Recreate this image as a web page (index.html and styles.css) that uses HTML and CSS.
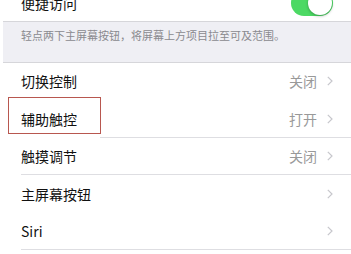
FILE: index.html
```html
<!DOCTYPE html>
<html lang="zh">
<head>
<meta charset="utf-8">
<link rel="stylesheet" href="styles.css">
</head>
<body>
<div class="screen">
  <div class="row row-top">
    <span class="label">便捷访问</span>
    <span class="toggle"><span class="knob"></span></span>
  </div>
  <div class="footer">轻点两下主屏幕按钮，将屏幕上方项目拉至可及范围。</div>
  <div class="group">
    <div class="row no-line">
      <span class="label">切换控制</span>
      <span class="value">关闭</span>
      <svg class="chev" viewBox="0 0 6 10"><polyline points="0.8,0.8 5,5 0.8,9.2"/></svg>
    </div>
    <div class="row boxed">
      <span class="label">辅助触控</span>
      <span class="value">打开</span>
      <svg class="chev" viewBox="0 0 6 10"><polyline points="0.8,0.8 5,5 0.8,9.2"/></svg>
      <span class="highlight"></span>
    </div>
    <div class="row">
      <span class="label">触摸调节</span>
      <span class="value">关闭</span>
      <svg class="chev" viewBox="0 0 6 10"><polyline points="0.8,0.8 5,5 0.8,9.2"/></svg>
    </div>
    <div class="row no-line">
      <span class="label">主屏幕按钮</span>
      <svg class="chev" viewBox="0 0 6 10"><polyline points="0.8,0.8 5,5 0.8,9.2"/></svg>
    </div>
    <div class="row">
      <span class="label">Siri</span>
      <svg class="chev" viewBox="0 0 6 10"><polyline points="0.8,0.8 5,5 0.8,9.2"/></svg>
    </div>
  </div>
</div>
</body>
</html>
```
FILE: styles.css
```css
html, body {
  margin: 0;
  padding: 0;
  background: #fff;
  overflow: hidden;
}
.screen {
  width: 351px;
  height: 254px;
  overflow: hidden;
  font-family: "Noto Sans CJK SC", "Noto Sans", sans-serif;
  color: #111;
}
.row {
  position: relative;
  display: flex;
  align-items: center;
  height: 37.5px;
  padding: 0 18px 0 21px;
  box-sizing: border-box;
  font-size: 14px;
}
.row::after {
  content: "";
  position: absolute;
  left: 21px;
  right: 0;
  bottom: 0;
  height: 1px;
  background: #dedee2;
}
.row.no-line::after { display: none; }
.row.boxed::after { left: 100px; }
.row-top {
  margin-top: -15px;
  height: 36.5px;
  padding-right: 18px;
}
.row-top::after { left: 3px; background: #d6d6da; }
.label {
  flex: 1;
  line-height: 1;
}
.toggle {
  position: relative;
  width: 42px;
  height: 26px;
  border-radius: 13px;
  background: #4cd964;
}
.knob {
  position: absolute;
  right: 1px;
  top: 1px;
  width: 24px;
  height: 24px;
  border-radius: 50%;
  background: #fff;
  box-shadow: 0 1px 3px rgba(0,0,0,0.3);
}
.footer {
  margin-left: 3px;
  height: 41px;
  box-sizing: border-box;
  background: #efeff4;
  border-bottom: 1px solid #d6d6da;
  padding: 6px 0 0 18px;
  font-size: 11px;
  line-height: 14px;
  color: #8a8a8f;
}
.value {
  color: #999;
  font-size: 14px;
  margin-right: 10px;
}
.chev {
  width: 6px;
  height: 10px;
  fill: none;
  stroke: #c7c7cc;
  stroke-width: 1.2;
}
.highlight {
  position: absolute;
  left: 8px;
  top: -3.5px;
  width: 93px;
  height: 37px;
  box-sizing: border-box;
  border: 1px solid #b8574f;
}
```
